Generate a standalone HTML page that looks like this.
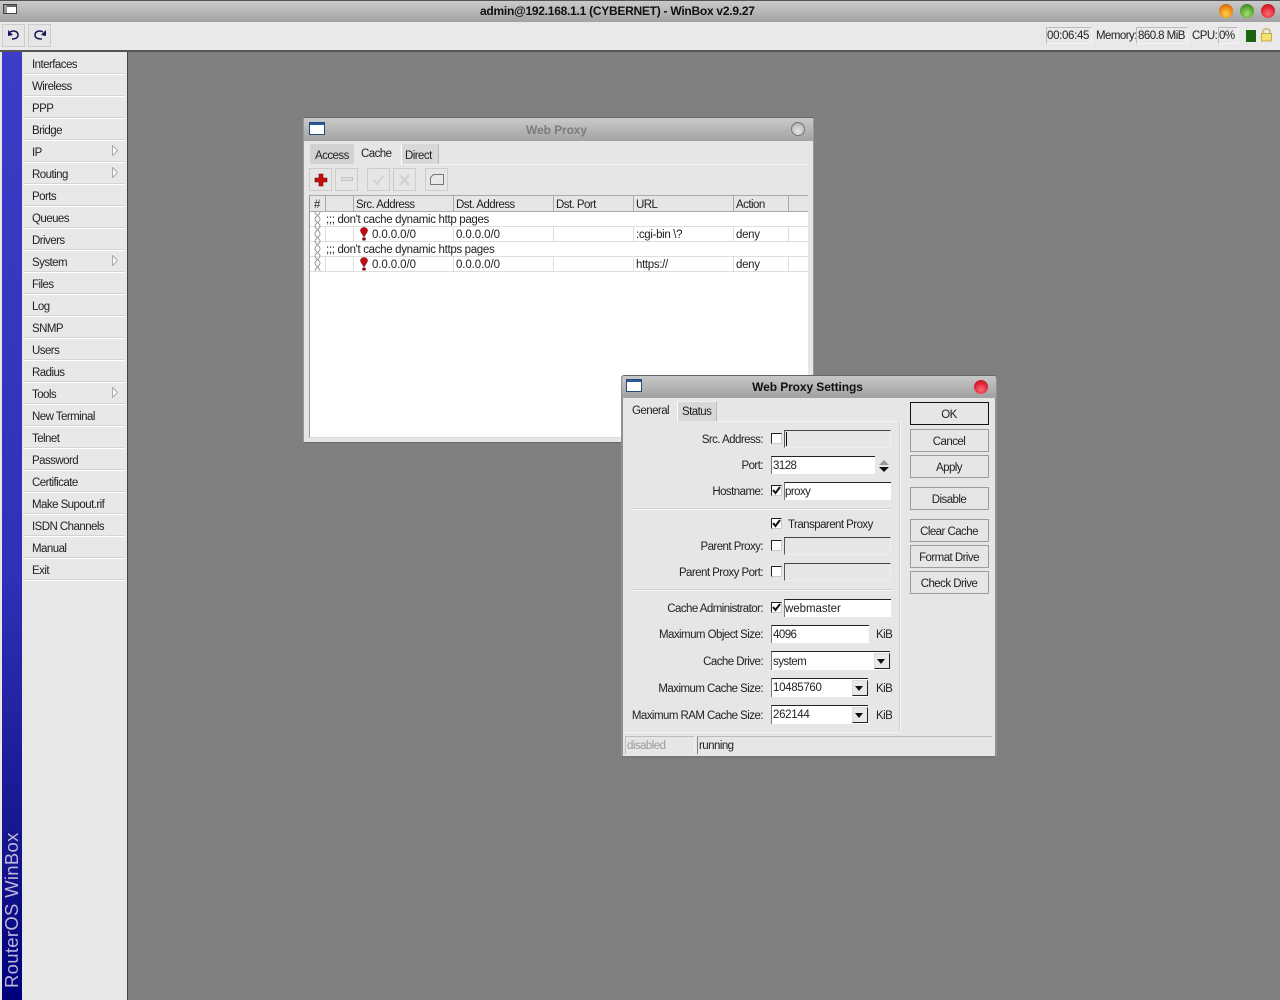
<!DOCTYPE html>
<html><head><meta charset="utf-8"><style>
html,body{margin:0;padding:0;width:1280px;height:1000px;overflow:hidden;background:#808080}
body{position:relative;font-family:"Liberation Sans",sans-serif;font-size:11.5px;letter-spacing:-.55px;color:#222}
div,span,svg{position:absolute;box-sizing:border-box}
.t{height:16px;line-height:16px;white-space:nowrap;margin-top:1px}
.r{text-align:right}
.c{text-align:center}
.tt{font-weight:bold;font-size:12px;letter-spacing:-.1px;margin-top:0}
.l{letter-spacing:-.33px}
.sep{left:24px;width:101px;height:2px;background:#fff;border-top:1px solid #d4d4d4}
.b{border:1px solid #b4b4b4;background:#e6e6e6}
.in{background:#fff;border-top:1px solid #222;border-left:1px solid #777;height:18px;line-height:19px;padding-left:1px}
.dis{background:#e6e6e6;border-top:1px solid #444;border-left:1px solid #555;border-right:1px solid #eee;border-bottom:1px solid #eee;height:18px}
.cb{width:11px;height:11px;background:#fff;border-top:1px solid #222;border-left:1px solid #222;border-right:1px solid #ccc;border-bottom:1px solid #ccc}
.btn{left:910px;width:79px;height:23px;border:1px solid #9c9c9c;background:#e6e6e6;text-align:center;line-height:24px;text-indent:-1px}
.dd{width:16px;height:16px;background:#e8e8e8;border-right:1px solid #222;border-bottom:1px solid #222;border-top:1px solid #ddd;border-left:1px solid #ddd}
.dd:after{content:"";position:absolute;left:2px;top:5px;border-left:4px solid transparent;border-right:4px solid transparent;border-top:5px solid #111}
.orb{border-radius:50%;width:14px;height:14px}
.h{height:16px;top:195px;border-right:1px solid #aaa}
.vl{width:1px;background:#dedede}
.hl{height:1px;background:#dedede}
</style></head><body>
<!-- title bar -->
<div style="left:0;top:0;width:1280px;height:22px;background:linear-gradient(#cacaca,#a2a2a2);border-top:1px solid #555"></div>
<svg style="left:3px;top:4px" width="14" height="10"><rect x=".5" y=".5" width="13" height="9" fill="#fff" stroke="#444"/><rect x="1" y="1" width="12" height="2" fill="#666"/><rect x="1" y="1" width="3" height="8" fill="#999"/></svg>
<div class="t tt" style="left:480px;top:3px;width:276px;color:#111;letter-spacing:-.26px">admin@192.168.1.1 (CYBERNET) - WinBox v2.9.27</div>
<div class="orb" style="left:1219px;top:4px;background:radial-gradient(circle at 50% 70%,#ffd24a,#e87a10 65%,#8a5a30)"></div>
<div class="orb" style="left:1240px;top:4px;background:radial-gradient(circle at 50% 70%,#a8e070,#4c9c2c 65%,#3c6c30)"></div>
<div class="orb" style="left:1261px;top:4px;background:radial-gradient(circle at 50% 70%,#ff6a78,#d81c2c 65%,#8a2c30)"></div>
<!-- toolbar -->
<div style="left:0;top:22px;width:1280px;height:29px;background:#e9e9e9"></div>
<div style="left:0;top:50px;width:1280px;height:2px;background:#555"></div>
<div class="b" style="left:2px;top:24px;width:23px;height:23px;border-color:#ccc"></div>
<div class="b" style="left:28px;top:24px;width:23px;height:23px;border-color:#ccc"></div>
<svg style="left:7px;top:29px" width="14" height="12" fill="none"><path d="M3 3C6 1 11 2 11 6C11 9 8 10 5 10" stroke="#16165c" stroke-width="1.5"/><path d="M1 1L1 7L6 6Z" fill="#16165c"/></svg>
<svg style="left:33px;top:29px" width="14" height="12" fill="none"><path d="M10 3C7 1 2 2 2 6C2 9 5 10 9 10" stroke="#16165c" stroke-width="1.5"/><path d="M13 1L13 7L8 6Z" fill="#16165c"/></svg>
<div style="left:1046px;top:27px;width:46px;height:17px;border-top:1px solid #bbb;border-left:1px solid #bbb;border-right:1px solid #f4f4f4;border-bottom:1px solid #f4f4f4"></div>
<div class="t l" style="left:1047px;top:27px">00:06:45</div>
<div class="t" style="left:1096px;top:27px">Memory:</div>
<div style="left:1136px;top:27px;width:52px;height:17px;border-top:1px solid #bbb;border-left:1px solid #bbb;border-right:1px solid #f4f4f4;border-bottom:1px solid #f4f4f4"></div>
<div class="t" style="left:1138px;top:27px">860.8 MiB</div>
<div class="t" style="left:1192px;top:27px">CPU:</div>
<div style="left:1218px;top:27px;width:20px;height:17px;border-top:1px solid #bbb;border-left:1px solid #bbb;border-right:1px solid #f4f4f4;border-bottom:1px solid #f4f4f4"></div>
<div class="t" style="left:1219px;top:27px">0%</div>
<div style="left:1246px;top:30px;width:10px;height:12px;background:#1e6410"></div>
<svg style="left:1260px;top:27px" width="13" height="15" fill="none"><path d="M3 7V4.500C3 1 10 1 10 4.500V7" stroke="#c4b46c" stroke-width="1.500"/><rect x="1.500" y="6.500" width="10" height="7.500" fill="#f4e26c" stroke="#c4aa50"/></svg>
<!-- sidebar -->
<div style="left:0;top:52px;width:127px;height:948px;background:#e8e8e8"></div>
<div style="left:127px;top:52px;width:1px;height:948px;background:#444"></div>
<div style="left:2px;top:52px;width:20px;height:948px;background:linear-gradient(#3c3cc8 0%,#3030b8 55%,#14148c 85%,#00007c 100%)"></div>
<div class="t" style="left:-66px;top:900px;margin-top:0;width:156px;height:20px;line-height:20px;transform:rotate(-90deg);color:#b8b8dc;font-family:'Liberation Sans',sans-serif;font-size:18.500px;letter-spacing:.3px;white-space:nowrap">RouterOS WinBox</div>
<div class="t" style="left:32px;top:56px">Interfaces</div><div class="sep" style="top:73px"></div>
<div class="t" style="left:32px;top:78px">Wireless</div><div class="sep" style="top:95px"></div>
<div class="t" style="left:32px;top:100px">PPP</div><div class="sep" style="top:117px"></div>
<div class="t" style="left:32px;top:122px">Bridge</div><div class="sep" style="top:139px"></div>
<div class="t" style="left:32px;top:144px">IP</div><div class="sep" style="top:161px"></div>
<div class="t" style="left:32px;top:166px">Routing</div><div class="sep" style="top:183px"></div>
<div class="t" style="left:32px;top:188px">Ports</div><div class="sep" style="top:205px"></div>
<div class="t" style="left:32px;top:210px">Queues</div><div class="sep" style="top:227px"></div>
<div class="t" style="left:32px;top:232px">Drivers</div><div class="sep" style="top:249px"></div>
<div class="t" style="left:32px;top:254px">System</div><div class="sep" style="top:271px"></div>
<div class="t" style="left:32px;top:276px">Files</div><div class="sep" style="top:293px"></div>
<div class="t" style="left:32px;top:298px">Log</div><div class="sep" style="top:315px"></div>
<div class="t" style="left:32px;top:320px">SNMP</div><div class="sep" style="top:337px"></div>
<div class="t" style="left:32px;top:342px">Users</div><div class="sep" style="top:359px"></div>
<div class="t" style="left:32px;top:364px">Radius</div><div class="sep" style="top:381px"></div>
<div class="t" style="left:32px;top:386px">Tools</div><div class="sep" style="top:403px"></div>
<div class="t" style="left:32px;top:408px">New Terminal</div><div class="sep" style="top:425px"></div>
<div class="t" style="left:32px;top:430px">Telnet</div><div class="sep" style="top:447px"></div>
<div class="t" style="left:32px;top:452px">Password</div><div class="sep" style="top:469px"></div>
<div class="t" style="left:32px;top:474px">Certificate</div><div class="sep" style="top:491px"></div>
<div class="t" style="left:32px;top:496px">Make Supout.rif</div><div class="sep" style="top:513px"></div>
<div class="t" style="left:32px;top:518px">ISDN Channels</div><div class="sep" style="top:535px"></div>
<div class="t" style="left:32px;top:540px">Manual</div><div class="sep" style="top:557px"></div>
<div class="t" style="left:32px;top:562px">Exit</div><div class="sep" style="top:579px"></div>
<svg style="left:112px;top:145px" width="6" height="11"><path d="M.5 .5L5.500 5.500L.5 10.500Z" fill="#fff" stroke="#aaa"/></svg>
<svg style="left:112px;top:167px" width="6" height="11"><path d="M.5 .5L5.500 5.500L.5 10.500Z" fill="#fff" stroke="#aaa"/></svg>
<svg style="left:112px;top:255px" width="6" height="11"><path d="M.5 .5L5.500 5.500L.5 10.500Z" fill="#fff" stroke="#aaa"/></svg>
<svg style="left:112px;top:387px" width="6" height="11"><path d="M.5 .5L5.500 5.500L.5 10.500Z" fill="#fff" stroke="#aaa"/></svg>
<!-- Web Proxy window -->
<div style="left:303px;top:117px;width:511px;height:326px;background:#e6e6e6;border:1px solid #666;border-radius:3px 3px 0 0;border-left:1px solid #999;border-right:1px solid #999"></div>
<div style="left:304px;top:118px;width:509px;height:23px;background:linear-gradient(#cacaca,#a2a2a2);border-radius:3px 3px 0 0"></div>
<div style="left:304px;top:141px;width:5px;height:301px;background:#e6e6e6"></div>
<svg style="left:309px;top:122px" width="16" height="13"><rect x=".5" y=".5" width="15" height="12" fill="#fff" stroke="#224a7c"/><rect x="1" y="1" width="14" height="2" fill="#2a5a9c"/></svg>
<div class="t c tt" style="left:304px;top:122px;width:505px;color:#7c7c7c">Web Proxy</div>
<div class="orb" style="left:791px;top:122px;border:1px solid #777;background:radial-gradient(circle at 50% 70%,#e4e4e4,#bcbcbc 70%,#8c8c8c)"></div>
<div style="left:310px;top:144px;width:44px;height:20px;background:#d2d2d2"></div>
<div class="t" style="left:315px;top:147px">Access</div>
<div class="t" style="left:361px;top:145px">Cache</div>
<div style="left:401px;top:144px;width:38px;height:20px;background:#d8d8d8;border-left:1px solid #fff;border-right:1px solid #bbb"></div>
<div class="t" style="left:405px;top:147px">Direct</div>
<div style="left:402px;top:164px;width:406px;height:1px;background:#f4f4f4"></div>
<div class="b" style="left:309px;top:168px;width:23px;height:23px;border-color:#ccc"></div>
<div class="b" style="left:335px;top:168px;width:23px;height:23px;border-color:#ccc"></div>
<div class="b" style="left:367px;top:168px;width:23px;height:23px;border-color:#ccc"></div>
<div class="b" style="left:393px;top:168px;width:23px;height:23px;border-color:#ccc"></div>
<div class="b" style="left:425px;top:168px;width:23px;height:23px;border-color:#ccc"></div>
<svg style="left:314px;top:173px" width="14" height="14"><path d="M5 1H9V5H13V9H9V13H5V9H1V5H5Z" fill="#cc0a0a" stroke="#5a1010" stroke-width=".6"/></svg>
<svg style="left:340px;top:176px" width="14" height="7"><rect x="1.500" y="1.500" width="11" height="3" fill="#e0e0e0" stroke="#c4c4c4"/></svg>
<svg style="left:371px;top:173px" width="15" height="14" fill="none"><path d="M3 7L6 11L12 3" stroke="#d2d2d2" stroke-width="2"/></svg>
<svg style="left:397px;top:173px" width="15" height="14" fill="none"><path d="M3 2L12 12M12 2L3 12" stroke="#d2d2d2" stroke-width="2.500"/></svg>
<svg style="left:430px;top:174px" width="14" height="11"><path d="M.5 10.500V3.500L3.500 .5H13.500V10.500Z" fill="#e8e8e8" stroke="#777"/></svg>
<!-- list -->
<div style="left:309px;top:195px;width:499px;height:243px;background:#fff;border-left:1px solid #999;border-bottom:1px solid #ddd"></div>
<div style="left:310px;top:195px;width:498px;height:17px;background:#e6e6e6;border-top:1px solid #aaa;border-bottom:1px solid #aaa"></div>
<div class="h" style="left:310px;width:16px"></div><div class="h" style="left:326px;width:28px"></div><div class="h" style="left:354px;width:100px"></div><div class="h" style="left:454px;width:100px"></div><div class="h" style="left:554px;width:80px"></div><div class="h" style="left:634px;width:100px"></div><div class="h" style="left:734px;width:55px"></div>
<div class="t" style="left:314px;top:196px">#</div>
<div class="t" style="left:356px;top:196px">Src. Address</div>
<div class="t" style="left:456px;top:196px">Dst. Address</div>
<div class="t" style="left:556px;top:196px">Dst. Port</div>
<div class="t" style="left:636px;top:196px">URL</div>
<div class="t" style="left:736px;top:196px">Action</div>
<div class="hl" style="left:310px;top:226px;width:498px"></div>
<div class="hl" style="left:310px;top:241px;width:498px"></div>
<div class="hl" style="left:310px;top:256px;width:498px"></div>
<div class="hl" style="left:310px;top:271px;width:498px"></div>
<div class="vl" style="left:325px;top:226px;height:15px"></div><div class="vl" style="left:353px;top:226px;height:15px"></div><div class="vl" style="left:453px;top:226px;height:15px"></div><div class="vl" style="left:553px;top:226px;height:15px"></div><div class="vl" style="left:633px;top:226px;height:15px"></div><div class="vl" style="left:733px;top:226px;height:15px"></div><div class="vl" style="left:788px;top:226px;height:15px"></div>
<div class="vl" style="left:325px;top:256px;height:15px"></div><div class="vl" style="left:353px;top:256px;height:15px"></div><div class="vl" style="left:453px;top:256px;height:15px"></div><div class="vl" style="left:553px;top:256px;height:15px"></div><div class="vl" style="left:633px;top:256px;height:15px"></div><div class="vl" style="left:733px;top:256px;height:15px"></div><div class="vl" style="left:788px;top:256px;height:15px"></div>
<svg style="left:314px;top:211px" width="8" height="60" fill="none" stroke="#999"><path d="M1 1C1 4 6 5 6 8C6 11 1 12 1 15C1 18 6 19 6 23C6 26 1 27 1 30C1 33 6 34 6 38C6 41 1 42 1 45C1 48 6 49 6 52C6 55 1 57 1 60M6 1C6 4 1 5 1 8C1 11 6 12 6 15C6 18 1 19 1 23C1 26 6 27 6 30C6 33 1 34 1 38C1 41 6 42 6 45C6 48 1 49 1 52C1 55 6 57 6 60"/></svg>
<div class="t l" style="left:326px;top:211px">;;; don't cache dynamic http pages</div>
<div class="t l" style="left:372px;top:226px;letter-spacing:-.1px">0.0.0.0/0</div>
<div class="t l" style="left:456px;top:226px;letter-spacing:-.1px">0.0.0.0/0</div>
<div class="t l" style="left:636px;top:226px">:cgi-bin \?</div>
<div class="t l" style="left:736px;top:226px">deny</div>
<div class="t l" style="left:326px;top:241px">;;; don't cache dynamic https pages</div>
<div class="t l" style="left:372px;top:256px;letter-spacing:-.1px">0.0.0.0/0</div>
<div class="t l" style="left:456px;top:256px;letter-spacing:-.1px">0.0.0.0/0</div>
<div class="t l" style="left:636px;top:256px">https://</div>
<div class="t l" style="left:736px;top:256px">deny</div>
<svg style="left:360px;top:227px" width="8" height="14" viewBox="0 0 9 14" preserveAspectRatio="none"><path d="M.5 3.500C.5 -.5 8.500 -.5 8.500 3.500C8.500 5.500 6 7 5.200 9.500H3.800C3 7 .5 5.500 .5 3.500Z" fill="#c40c10" stroke="#5c1010" stroke-width=".5"/><rect x="2.500" y="10.500" width="4" height="3" rx="1" fill="#7c1014"/></svg>
<svg style="left:360px;top:257px" width="8" height="14" viewBox="0 0 9 14" preserveAspectRatio="none"><path d="M.5 3.500C.5 -.5 8.500 -.5 8.500 3.500C8.500 5.500 6 7 5.200 9.500H3.800C3 7 .5 5.500 .5 3.500Z" fill="#c40c10" stroke="#5c1010" stroke-width=".5"/><rect x="2.500" y="10.500" width="4" height="3" rx="1" fill="#7c1014"/></svg>
<!-- Settings window -->
<div style="left:621px;top:375px;width:376px;height:383px;background:#e6e6e6;border:1px solid #666;border-radius:3px 3px 0 0;border-left:2px solid #909090;border-right:2px solid #909090;border-bottom:2px solid #777"></div>
<div style="left:622px;top:376px;width:374px;height:22px;background:linear-gradient(#c8c8c8,#a0a0a0);border-radius:3px 3px 0 0"></div>
<svg style="left:626px;top:379px" width="16" height="13"><rect x=".5" y=".5" width="15" height="12" fill="#fff" stroke="#224a7c"/><rect x="1" y="1" width="14" height="2" fill="#2a5a9c"/></svg>
<div class="t c tt" style="left:622px;top:379px;width:371px;color:#111">Web Proxy Settings</div>
<div class="orb" style="left:974px;top:380px;background:radial-gradient(circle at 50% 70%,#ff6a78,#d81c2c 65%,#8a2c30)"></div>
<div class="t" style="left:632px;top:402px">General</div>
<div style="left:677px;top:401px;width:40px;height:20px;background:#d8d8d8;border-left:1px solid #fff;border-right:1px solid #bbb;border-top:1px solid #f0f0f0"></div>
<div class="t" style="left:682px;top:403px">Status</div>
<div style="left:717px;top:421px;width:183px;height:1px;background:#f4f4f4"></div>
<div style="left:899px;top:421px;height:312px;background:#f4f4f4;border-left:1px solid #d4d4d4;width:2px"></div>
<div style="left:626px;top:732px;width:274px;height:1px;background:#f4f4f4"></div>
<div class="t r" style="left:622px;top:431px;width:141px">Src. Address:</div>
<div class="cb" style="left:771px;top:433px"></div>
<div class="dis" style="left:784px;top:430px;width:107px"></div>
<div style="left:786px;top:432px;width:1px;height:14px;background:#111"></div>
<div class="t r" style="left:622px;top:457px;width:141px">Port:</div>
<div class="in" style="left:771px;top:456px;width:104px">3128</div>
<svg style="left:878px;top:460px" width="12" height="12"><path d="M6 0L11 5H1Z" fill="#999"/><path d="M1 7H11L6 12Z" fill="#111"/></svg>
<div class="t r" style="left:622px;top:483px;width:141px">Hostname:</div>
<div class="cb" style="left:771px;top:485px"></div>
<svg style="left:771px;top:485px" width="11" height="11" fill="none"><path d="M2 5L4.500 8L9 2" stroke="#111" stroke-width="2"/></svg>
<div class="in" style="left:784px;top:482px;width:107px;padding-left:0">proxy</div>
<div class="hl" style="left:632px;top:508px;width:260px;background:#d0d0d0;"></div><div class="hl" style="left:632px;top:509px;width:260px;background:#f6f6f6;"></div>
<div class="cb" style="left:771px;top:518px"></div>
<svg style="left:771px;top:518px" width="11" height="11" fill="none"><path d="M2 5L4.500 8L9 2" stroke="#111" stroke-width="2"/></svg>
<div class="t" style="left:788px;top:516px">Transparent Proxy</div>
<div class="t r" style="left:622px;top:538px;width:141px">Parent Proxy:</div>
<div class="cb" style="left:771px;top:540px"></div>
<div class="dis" style="left:784px;top:537px;width:107px"></div>
<div class="t r" style="left:622px;top:564px;width:141px">Parent Proxy Port:</div>
<div class="cb" style="left:771px;top:566px"></div>
<div class="dis" style="left:784px;top:563px;width:107px"></div>
<div class="hl" style="left:632px;top:589px;width:260px;background:#d0d0d0;"></div><div class="hl" style="left:632px;top:590px;width:260px;background:#f6f6f6;"></div>
<div class="t r" style="left:622px;top:600px;width:141px">Cache Administrator:</div>
<div class="cb" style="left:771px;top:602px"></div>
<svg style="left:771px;top:602px" width="11" height="11" fill="none"><path d="M2 5L4.500 8L9 2" stroke="#111" stroke-width="2"/></svg>
<div class="in" style="left:784px;top:599px;width:107px;padding-left:0;letter-spacing:-.05px">webmaster</div>
<div class="t r" style="left:622px;top:626px;width:141px">Maximum Object Size:</div>
<div class="in" style="left:771px;top:625px;width:98px">4096</div>
<div class="t" style="left:876px;top:626px">KiB</div>
<div class="t r" style="left:622px;top:653px;width:141px">Cache Drive:</div>
<div class="in" style="left:771px;top:651px;width:119px;height:19px;line-height:20px">system</div>
<div class="dd" style="left:874px;top:653px"></div>
<div class="t r" style="left:622px;top:680px;width:141px">Maximum Cache Size:</div>
<div class="in" style="left:771px;top:678px;width:97px;height:19px;line-height:19px;letter-spacing:-.33px">10485760</div>
<div class="dd" style="left:852px;top:680px"></div>
<div class="t" style="left:876px;top:680px">KiB</div>
<div class="t r" style="left:622px;top:707px;width:141px">Maximum RAM Cache Size:</div>
<div class="in" style="left:771px;top:705px;width:97px;height:19px;line-height:19px;letter-spacing:-.33px">262144</div>
<div class="dd" style="left:852px;top:707px"></div>
<div class="t" style="left:876px;top:707px">KiB</div>
<div class="btn" style="top:402px;height:23px;border:1px solid #111">OK</div>
<div class="btn" style="top:429px">Cancel</div>
<div class="btn" style="top:455px">Apply</div>
<div class="btn" style="top:487px">Disable</div>
<div class="btn" style="top:519px">Clear Cache</div>
<div class="btn" style="top:545px">Format Drive</div>
<div class="btn" style="top:571px">Check Drive</div>
<div style="left:625px;top:736px;width:70px;height:18px;border-top:1px solid #bbb;border-left:1px solid #bbb;border-right:1px solid #f4f4f4"></div>
<div class="t" style="left:627px;top:737px;color:#9a9a9a">disabled</div>
<div style="left:697px;top:736px;width:295px;height:18px;border-top:1px solid #bbb;border-left:1px solid #888"></div>
<div class="t" style="left:699px;top:737px">running</div>
</body></html>
